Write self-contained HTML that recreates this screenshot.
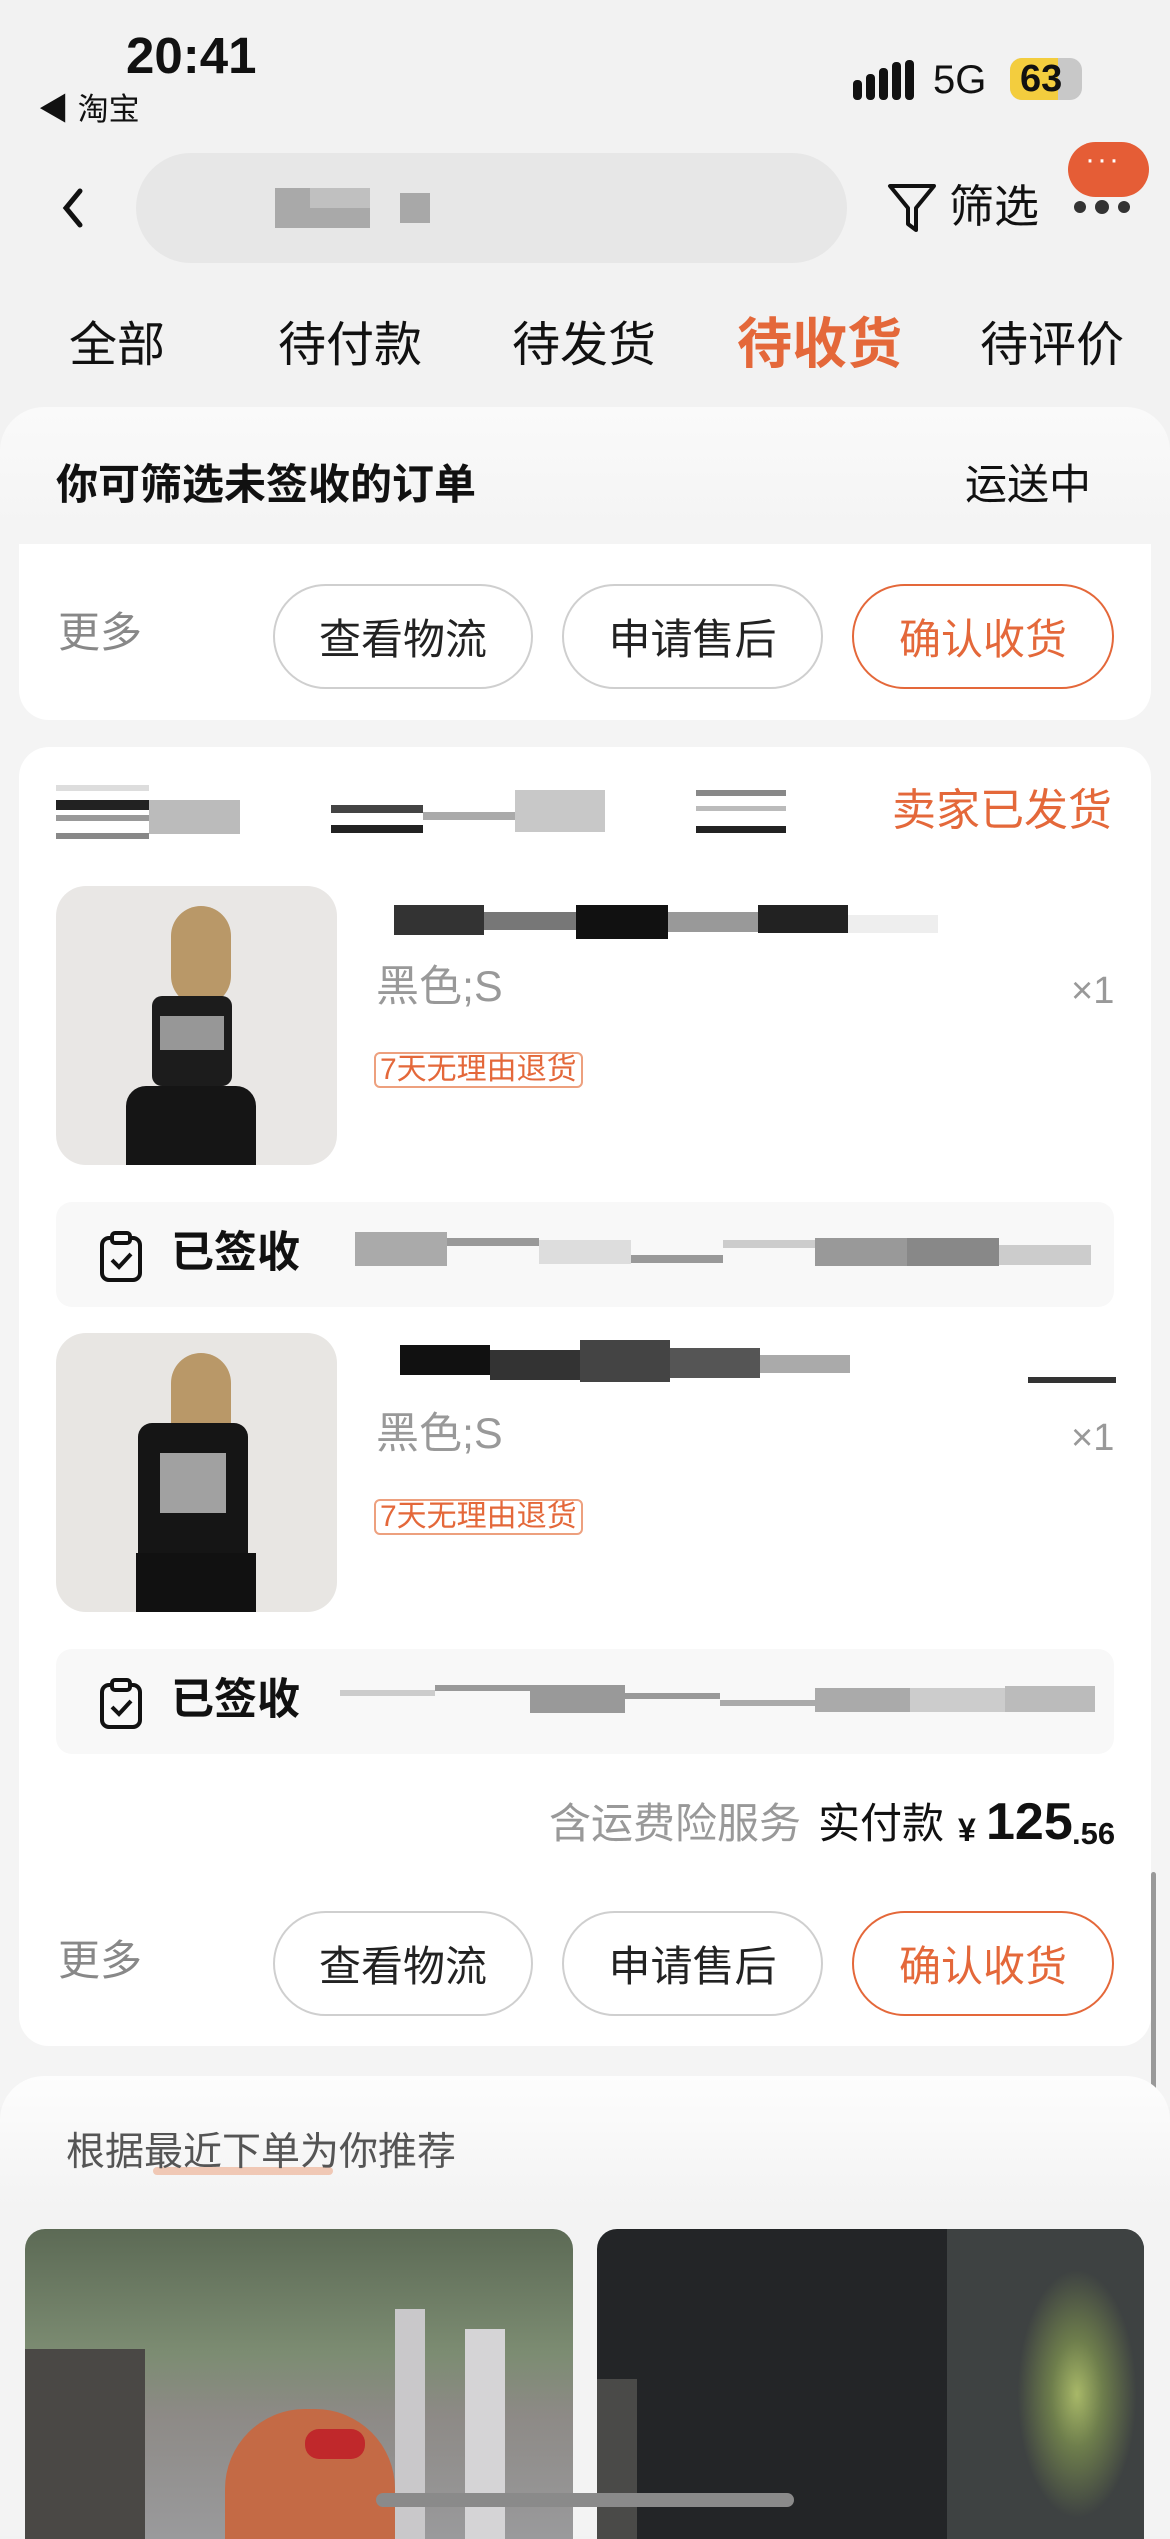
<!DOCTYPE html>
<html><head><meta charset="utf-8">
<style>
*{margin:0;padding:0;box-sizing:border-box}
body{width:1170px;height:2532px;background:#f2f2f2;position:relative;overflow:hidden;font-family:"Liberation Sans","Noto Sans CJK SC",sans-serif;color:#111}
.a{position:absolute}
.t{position:absolute;white-space:nowrap;line-height:1}
.btn{position:absolute;height:105px;border:2px solid #cfcfcf;border-radius:53px;font-size:42px;display:flex;align-items:center;justify-content:center;color:#222;background:#fff}
.btn.o{border-color:#e4683a;color:#e4683a}
.card{position:absolute;left:19px;width:1132px;background:#fff}
.blk{position:absolute}
.sign{position:absolute;left:56px;width:1058px;height:105px;background:#f8f8f8;border-radius:16px}
.tag{position:absolute;height:36px;border:2px solid #eda07e;border-radius:6px;color:#e4683a;font-size:30px;line-height:32px;padding:0 4px;background:#fff}
</style></head><body>
<div class="t" style="left:126px;top:30px;font-size:51px;font-weight:bold">20:41</div>
<div class="t" style="left:38px;top:94px;font-size:31px">◀ 淘宝</div>
<svg class="a" style="left:853px;top:60px" width="62" height="40"><g fill="#111"><rect x="0" y="20" width="9" height="20" rx="4"/><rect x="13" y="14" width="9" height="26" rx="4"/><rect x="26" y="8" width="9" height="32" rx="4"/><rect x="39" y="2" width="9" height="38" rx="4"/><rect x="52" y="0" width="9" height="40" rx="4"/></g></svg>
<div class="t" style="left:933px;top:60px;font-size:40px">5G</div>
<div class="a" style="left:1010px;top:58px;width:72px;height:42px;border-radius:12px;background:#c8c8c8;overflow:hidden"><div style="width:48px;height:42px;background:#f3cd3e"></div></div>
<div class="t" style="left:1020px;top:60px;font-size:38px;font-weight:bold">63</div>
<svg class="a" style="left:58px;top:185px" width="30" height="46"><path d="M22 6 L8 23 L22 40" stroke="#111" stroke-width="5" fill="none" stroke-linecap="round"/></svg>
<div class="a" style="left:136px;top:153px;width:711px;height:110px;border-radius:55px;background:#e7e7e7"></div>
<div class="a" style="left:275px;top:188px;width:95px;height:40px;background:#9a9a9a;opacity:.8"></div>
<div class="a" style="left:310px;top:188px;width:60px;height:20px;background:#c0c0c0"></div>
<div class="a" style="left:400px;top:193px;width:30px;height:30px;background:#a8a8a8"></div>
<svg class="a" style="left:886px;top:180px" width="52" height="56"><path d="M4 6 H48 L30 28 V50 L22 44 V28 Z" stroke="#111" stroke-width="4" fill="none" stroke-linejoin="round"/></svg>
<div class="t" style="left:949px;top:184px;font-size:45px">筛选</div>
<div class="a" style="left:1068px;top:142px;width:81px;height:55px;border-radius:28px;background:#e55d36"></div>
<div class="t" style="left:1085px;top:145px;font-size:30px;color:#fff;letter-spacing:2px">···</div>
<svg class="a" style="left:1072px;top:198px" width="60" height="20"><g fill="#333"><circle cx="8" cy="9" r="6"/><circle cx="30" cy="9" r="7"/><circle cx="52" cy="9" r="6"/></g></svg>
<div class="t" style="left:69px;top:322px;font-size:48px">全部</div>
<div class="t" style="left:278px;top:322px;font-size:48px">待付款</div>
<div class="t" style="left:512px;top:322px;font-size:48px">待发货</div>
<div class="t" style="left:737px;top:317px;font-size:55px;font-weight:bold;color:#e4683a">待收货</div>
<div class="t" style="left:980px;top:322px;font-size:48px">待评价</div>
<div class="a" style="left:0;top:407px;width:1170px;height:1700px;border-radius:44px 44px 0 0;background:linear-gradient(#fafafa,#f4f4f4 120px)"></div>
<div class="t" style="left:56px;top:464px;font-size:42px;font-weight:bold">你可筛选未签收的订单</div>
<div class="t" style="left:965px;top:464px;font-size:42px">运送中</div>
<div class="card" style="top:544px;height:176px;border-radius:0 0 30px 30px"></div>
<div class="t" style="left:58px;top:612px;font-size:42px;color:#888">更多</div>
<div class="btn" style="left:273px;top:584px;width:260px">查看物流</div>
<div class="btn" style="left:562px;top:584px;width:261px">申请售后</div>
<div class="btn o" style="left:852px;top:584px;width:262px">确认收货</div>
<div class="card" style="top:747px;height:1299px;border-radius:30px"></div>
<div class="blk" style="left:56px;top:785px;width:93px;height:6px;background:#ddd"></div>
<div class="blk" style="left:56px;top:800px;width:184px;height:10px;background:#222"></div>
<div class="blk" style="left:149px;top:800px;width:91px;height:34px;background:#bbb"></div>
<div class="blk" style="left:56px;top:815px;width:93px;height:6px;background:#999"></div>
<div class="blk" style="left:56px;top:833px;width:93px;height:6px;background:#888"></div>
<div class="blk" style="left:331px;top:805px;width:92px;height:8px;background:#444"></div>
<div class="blk" style="left:331px;top:825px;width:92px;height:8px;background:#222"></div>
<div class="blk" style="left:423px;top:812px;width:92px;height:8px;background:#aaa"></div>
<div class="blk" style="left:515px;top:790px;width:90px;height:42px;background:#c8c8c8"></div>
<div class="blk" style="left:696px;top:790px;width:90px;height:6px;background:#888"></div>
<div class="blk" style="left:696px;top:806px;width:90px;height:5px;background:#bbb"></div>
<div class="blk" style="left:696px;top:826px;width:90px;height:7px;background:#222"></div>
<div class="t" style="left:892px;top:789px;font-size:44px;color:#e4683a">卖家已发货</div>
<div class="a" style="left:56px;top:886px;width:281px;height:279px;border-radius:30px;background:#e9e7e5;overflow:hidden">
<div class="a" style="left:115px;top:20px;width:60px;height:100px;border-radius:30px;background:#b99868"></div>
<div class="a" style="left:96px;top:110px;width:80px;height:90px;background:#1c1c1c;border-radius:10px"></div>
<div class="a" style="left:104px;top:130px;width:64px;height:34px;background:#ccc;opacity:.7"></div>
<div class="a" style="left:70px;top:200px;width:130px;height:79px;background:#151515;border-radius:20px 20px 0 0"></div>
</div>
<div class="blk" style="left:394px;top:905px;width:90px;height:30px;background:#333"></div>
<div class="blk" style="left:484px;top:912px;width:92px;height:18px;background:#777"></div>
<div class="blk" style="left:576px;top:905px;width:92px;height:34px;background:#111"></div>
<div class="blk" style="left:668px;top:912px;width:90px;height:20px;background:#999"></div>
<div class="blk" style="left:758px;top:905px;width:90px;height:28px;background:#222"></div>
<div class="blk" style="left:848px;top:915px;width:90px;height:18px;background:#eee"></div>
<div class="t" style="left:376px;top:966px;font-size:43px;color:#999">黑色;S</div>
<div class="t" style="left:1071px;top:972px;font-size:38px;color:#999">×1</div>
<div class="tag" style="left:374px;top:1052px">7天无理由退货</div>
<div class="sign" style="top:1202px"></div>
<svg class="a" style="left:98px;top:1230px" width="46" height="52"><rect x="4" y="8" width="38" height="42" rx="7" stroke="#111" stroke-width="4" fill="none"/><rect x="14" y="3" width="18" height="10" rx="3" stroke="#111" stroke-width="4" fill="#f8f8f8"/><path d="M14 30 L21 37 L33 24" stroke="#111" stroke-width="4" fill="none"/></svg>
<div class="t" style="left:171px;top:1232px;font-size:43px;font-weight:bold">已签收</div>
<div class="blk" style="left:355px;top:1232px;width:92px;height:34px;background:#aaa"></div>
<div class="blk" style="left:447px;top:1238px;width:92px;height:8px;background:#999"></div>
<div class="blk" style="left:539px;top:1240px;width:92px;height:24px;background:#ddd"></div>
<div class="blk" style="left:631px;top:1255px;width:92px;height:8px;background:#999"></div>
<div class="blk" style="left:723px;top:1240px;width:92px;height:8px;background:#ccc"></div>
<div class="blk" style="left:815px;top:1238px;width:92px;height:28px;background:#999"></div>
<div class="blk" style="left:907px;top:1238px;width:92px;height:28px;background:#888"></div>
<div class="blk" style="left:999px;top:1245px;width:92px;height:20px;background:#ccc"></div>
<div class="a" style="left:56px;top:1333px;width:281px;height:279px;border-radius:30px;background:#e8e6e3;overflow:hidden">
<div class="a" style="left:115px;top:20px;width:60px;height:100px;border-radius:30px;background:#b99868"></div>
<div class="a" style="left:82px;top:90px;width:110px;height:150px;background:#151515;border-radius:14px"></div>
<div class="a" style="left:104px;top:120px;width:66px;height:60px;background:#ddd;opacity:.7"></div>
<div class="a" style="left:80px;top:220px;width:120px;height:59px;background:#111"></div>
</div>
<div class="blk" style="left:400px;top:1345px;width:90px;height:30px;background:#111"></div>
<div class="blk" style="left:490px;top:1350px;width:90px;height:30px;background:#333"></div>
<div class="blk" style="left:580px;top:1340px;width:90px;height:42px;background:#444"></div>
<div class="blk" style="left:670px;top:1348px;width:90px;height:30px;background:#555"></div>
<div class="blk" style="left:760px;top:1355px;width:90px;height:18px;background:#aaa"></div>
<div class="blk" style="left:1028px;top:1377px;width:88px;height:6px;background:#333"></div>
<div class="t" style="left:376px;top:1413px;font-size:43px;color:#999">黑色;S</div>
<div class="t" style="left:1071px;top:1419px;font-size:38px;color:#999">×1</div>
<div class="tag" style="left:374px;top:1499px">7天无理由退货</div>
<div class="sign" style="top:1649px"></div>
<svg class="a" style="left:98px;top:1677px" width="46" height="52"><rect x="4" y="8" width="38" height="42" rx="7" stroke="#111" stroke-width="4" fill="none"/><rect x="14" y="3" width="18" height="10" rx="3" stroke="#111" stroke-width="4" fill="#f8f8f8"/><path d="M14 30 L21 37 L33 24" stroke="#111" stroke-width="4" fill="none"/></svg>
<div class="t" style="left:171px;top:1679px;font-size:43px;font-weight:bold">已签收</div>
<div class="blk" style="left:340px;top:1690px;width:95px;height:6px;background:#ccc"></div>
<div class="blk" style="left:435px;top:1685px;width:95px;height:6px;background:#999"></div>
<div class="blk" style="left:530px;top:1685px;width:95px;height:28px;background:#999"></div>
<div class="blk" style="left:625px;top:1693px;width:95px;height:6px;background:#999"></div>
<div class="blk" style="left:720px;top:1700px;width:95px;height:6px;background:#aaa"></div>
<div class="blk" style="left:815px;top:1688px;width:95px;height:24px;background:#aaa"></div>
<div class="blk" style="left:910px;top:1688px;width:95px;height:24px;background:#ccc"></div>
<div class="blk" style="left:1005px;top:1686px;width:90px;height:26px;background:#bbb"></div>
<div class="t" style="left:549px;top:1803px;font-size:42px;color:#999">含运费险服务</div>
<div class="t" style="left:818px;top:1803px;font-size:42px">实付款</div>
<div class="t" style="left:958px;top:1814px;font-size:32px;font-weight:bold">¥</div>
<div class="t" style="left:986px;top:1796px;font-size:52px;font-weight:bold">125</div>
<div class="t" style="left:1072px;top:1818px;font-size:31px;font-weight:bold">.56</div>
<div class="t" style="left:58px;top:1940px;font-size:42px;color:#888">更多</div>
<div class="btn" style="left:273px;top:1911px;width:260px">查看物流</div>
<div class="btn" style="left:562px;top:1911px;width:261px">申请售后</div>
<div class="btn o" style="left:852px;top:1911px;width:262px">确认收货</div>
<div class="a" style="left:1151px;top:1872px;width:5px;height:282px;border-radius:3px;background:#999"></div>
<div class="a" style="left:0;top:2076px;width:1170px;height:460px;border-radius:44px 44px 0 0;background:linear-gradient(#fdfdfd,#f3f3f3 130px)"></div>
<div class="a" style="left:153px;top:2167px;width:180px;height:8px;border-radius:4px;background:#f0c8b5"></div>
<div class="t" style="left:66px;top:2133px;font-size:39px;color:#555">根据最近下单为你推荐</div>
<div class="a" style="left:25px;top:2229px;width:548px;height:310px;border-radius:20px 20px 0 0;overflow:hidden;background:linear-gradient(180deg,#5c6a55 0,#7c8c72 40%,#8d8a86 60%,#9a9a9c 100%)">
<div class="a" style="left:0;top:120px;width:120px;height:190px;background:#4a4845"></div>
<div class="a" style="left:440px;top:100px;width:40px;height:210px;background:#d5d4d6"></div>
<div class="a" style="left:370px;top:80px;width:30px;height:230px;background:#c9c8ca"></div>
<div class="a" style="left:200px;top:180px;width:170px;height:140px;border-radius:80px 80px 0 0;background:#c46a45"></div>
<div class="a" style="left:280px;top:200px;width:60px;height:30px;background:#c0282b;border-radius:14px"></div>
</div>
<div class="a" style="left:597px;top:2229px;width:547px;height:310px;border-radius:20px 20px 0 0;overflow:hidden;background:#232527">
<div class="a" style="left:350px;top:0;width:200px;height:310px;background:#3e4242"></div>
<div class="a" style="left:420px;top:40px;width:120px;height:250px;background:radial-gradient(#a8b868 0,#6e7e4c 30%,transparent 70%)"></div>
<div class="a" style="left:0;top:150px;width:40px;height:160px;background:#4a4a48"></div>
</div>
<div class="a" style="left:376px;top:2493px;width:418px;height:14px;border-radius:7px;background:#8a8a8a"></div>
</body></html>
